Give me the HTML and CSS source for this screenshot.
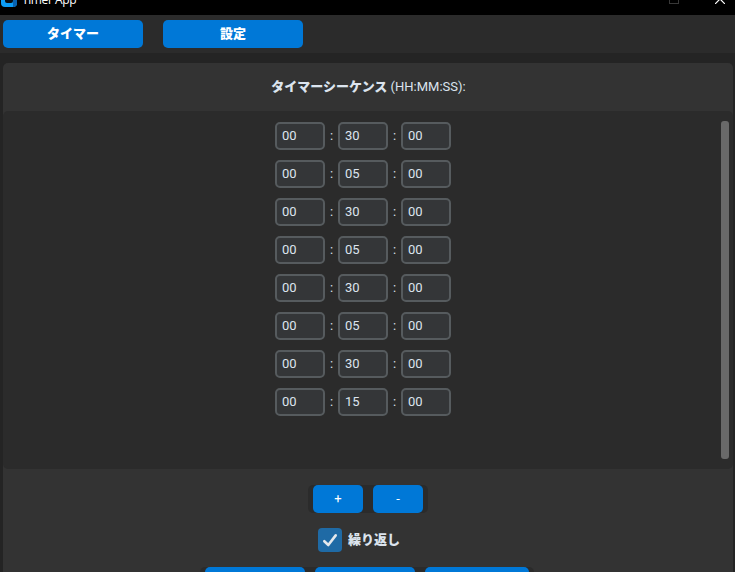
FILE: index.html
```html
<!DOCTYPE html>
<html lang="ja">
<head>
<meta charset="utf-8">
<title>Timer App</title>
<link rel="stylesheet" href="styles.css">
</head>
<body>
<div class="window">
  <header class="titlebar">
    <svg class="app-icon" width="16" height="16" viewBox="0 0 16 16">
      <rect width="16" height="16" rx="4" fill="#0c9cf5"/>
      <path d="M12 0a4 4 0 0 1 4 4v8a4 4 0 0 1-4 4z" fill="#0862b0"/>
      <rect x="4" y="4" width="8" height="8" rx="2" fill="#080c10"/>
    </svg>
    <span class="app-name">Timer App</span>
    <svg class="maximize" width="10" height="10" viewBox="0 0 10 10"><rect x=".5" y=".5" width="9" height="9" fill="none" stroke="#383838"/></svg>
    <svg class="close" width="10" height="10" viewBox="0 0 10 10"><path d="M0 0l10 10M10 0L0 10" stroke="#fff" stroke-width="1.2"/></svg>
  </header>
  <nav class="tabs">
    <button class="btn tab">タイマー</button>
    <button class="btn tab">設定</button>
  </nav>
  <main class="panel">
    <h1 class="heading"><b>タイマーシーケンス</b> (HH:MM:SS):</h1>
    <section class="sequence">
      <div class="rows">
        <div class="row"><input value="00"><span>:</span><input value="30"><span>:</span><input value="00"></div>
        <div class="row"><input value="00"><span>:</span><input value="05"><span>:</span><input value="00"></div>
        <div class="row"><input value="00"><span>:</span><input value="30"><span>:</span><input value="00"></div>
        <div class="row"><input value="00"><span>:</span><input value="05"><span>:</span><input value="00"></div>
        <div class="row"><input value="00"><span>:</span><input value="30"><span>:</span><input value="00"></div>
        <div class="row"><input value="00"><span>:</span><input value="05"><span>:</span><input value="00"></div>
        <div class="row"><input value="00"><span>:</span><input value="30"><span>:</span><input value="00"></div>
        <div class="row"><input value="00"><span>:</span><input value="15"><span>:</span><input value="00"></div>
      </div>
      <div class="scrollbar"></div>
    </section>
    <div class="group adjust">
      <button class="btn">+</button>
      <button class="btn">-</button>
    </div>
    <label class="repeat">
      <svg width="24" height="24" viewBox="0 0 24 24"><rect width="24" height="24" rx="4" fill="#1f6aa5"/><path d="M6.3 13.2l4 3.8 7.4-9.6" fill="none" stroke="#e4e8ec" stroke-width="2.6" stroke-linecap="round" stroke-linejoin="round"/></svg>
      <span>繰り返し</span>
    </label>
    <div class="group actions">
      <button class="btn"></button>
      <button class="btn"></button>
      <button class="btn last"></button>
    </div>
  </main>
</div>
</body>
</html>
```
FILE: styles.css
```css
* { box-sizing: border-box; }

body {
  margin: 0;
  background: #242424;
  color: #dce4ee;
  font: 13px/16px Roboto, "Noto Sans CJK JP", sans-serif;
}

.window {
  height: 572px;
  overflow: hidden;
}

.titlebar {
  display: flex;
  height: 15px;
  padding-left: 1px;
  background: #000;
  color: #fff;
  overflow: hidden;
}

.app-icon { margin-top: -9px; }

.app-name {
  margin: -8px 0 0 5px;
  font: 12px/16px "Open Sans", sans-serif;
  letter-spacing: -.4px;
}

.maximize { margin: -6px 0 0 auto; }
.close { margin: -6px 10px 0 36px; }

.tabs {
  display: flex;
  gap: 20px;
  height: 38px;
  padding: 5px 3px;
  background: #2b2b2b;
}

.btn {
  width: 50px;
  height: 28px;
  padding: 0;
  border: 0;
  border-radius: 5px;
  background: #0078d7;
  color: #fff;
  font: inherit;
}

.tab {
  width: 140px;
  font-weight: 900;
}

.panel {
  display: flex;
  flex-direction: column;
  align-items: center;
  height: 540px;
  margin: 10px 2px 0 3px;
  border-radius: 5px;
  background: #333;
}

.heading {
  flex: none;
  height: 48px;
  margin: 0;
  padding: 16px 0 0 1px;
  font-size: 13px;
  font-weight: 400;
}

.heading b { font-weight: 900; }

.sequence {
  display: flex;
  flex: none;
  width: 100%;
  height: 358px;
  padding: 10px 4px 10px 272px;
  border-radius: 5px;
  background: #2b2b2b;
}

.rows {
  display: flex;
  flex-direction: column;
  gap: 10px;
  padding-top: 1px;
}

.row {
  display: flex;
  align-items: center;
}

.row input {
  width: 50px;
  height: 28px;
  padding: 0 5px 2px;
  border: 2px solid #565b5e;
  border-radius: 5px;
  background: #343638;
  color: #dce4ee;
  font: inherit;
}

.row span {
  width: 13px;
  text-align: center;
}

.scrollbar {
  width: 8px;
  height: 338px;
  margin-left: auto;
  border-radius: 3px;
  background: #696969;
}

.group {
  display: flex;
  flex: none;
  gap: 10px;
  padding: 0 5px;
  border-radius: 5px;
  background: #2b2b2b;
}

.adjust { margin-top: 16px; }

.repeat {
  display: flex;
  align-items: center;
  gap: 6px;
  height: 24px;
  margin: 15px 0 0 -18px;
  font-weight: 900;
}

.actions { margin: 15px 0 0 -2px; }
.actions .btn { width: 100px; }
.actions .last { width: 104px; }
```
